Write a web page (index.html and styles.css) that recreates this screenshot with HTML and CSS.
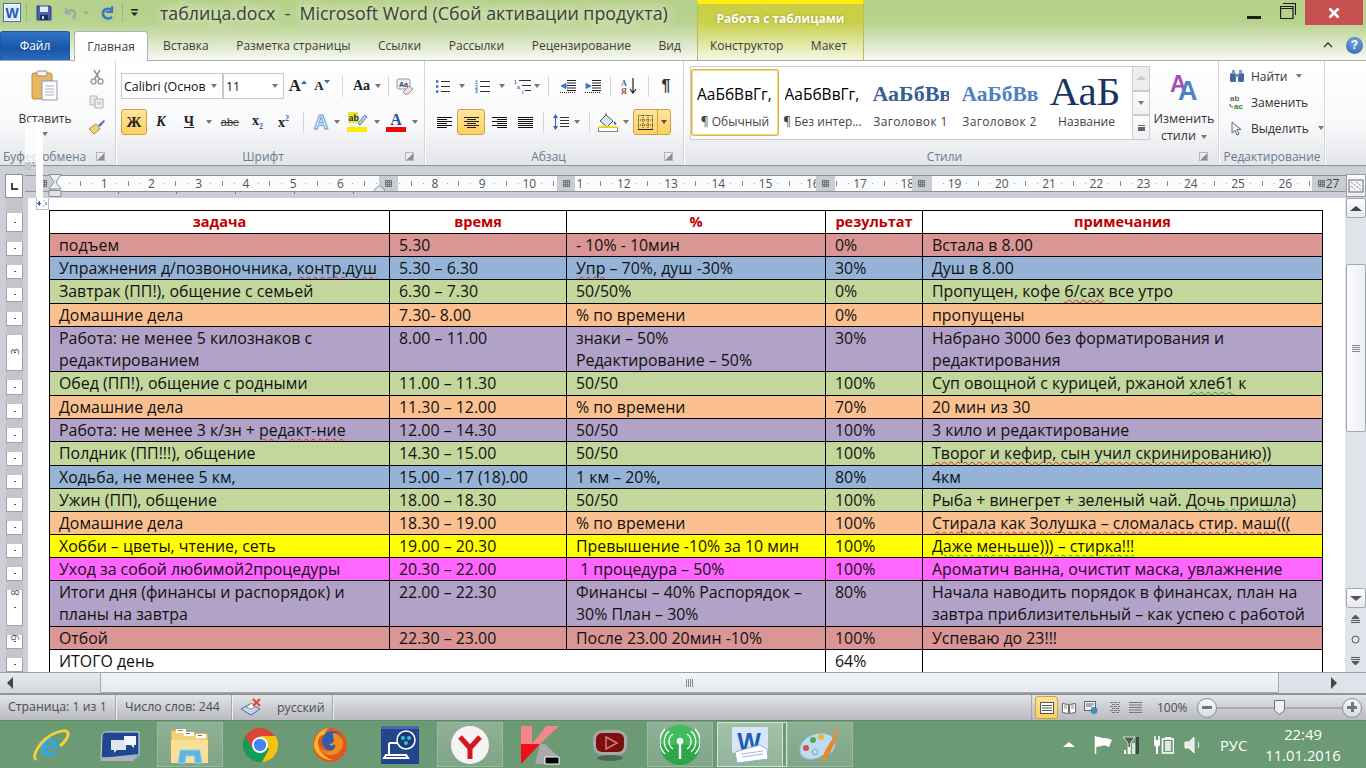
FILE: index.html
```html
<!DOCTYPE html>
<html lang="ru">
<head>
<meta charset="utf-8">
<title>таблица.docx - Microsoft Word</title>
<link rel="stylesheet" href="styles.css">
</head>
<body>
<div class="app">

<header class="top">
  <div class="ctx"><div class="ctxlabel">Работа с таблицами</div></div>
  <div class="titlerow">
    <svg class="wlogo" width="18" height="19" viewBox="0 0 18 19"><rect x=".5" y=".5" width="17" height="18" fill="#fff" stroke="#3f6fb5"/><rect x="2" y="2" width="14" height="15" fill="#dfe9f7"/><text x="9" y="15" text-anchor="middle" class="wlet" fill="#1d5fb4">W</text></svg>
    <span class="qsep"></span>
    <svg class="q1" width="16" height="16" viewBox="0 0 16 16"><path d="M1 1h13l1 1v13H1z" fill="#4a5fae" stroke="#2c3c80"/><rect x="4" y="1.5" width="8" height="5.5" fill="#e9edf6"/><rect x="4" y="10" width="8" height="5" fill="#1f2b66"/><rect x="6" y="11" width="2" height="3" fill="#c6cfe6"/></svg>
    <svg class="q2" width="16" height="16" viewBox="0 0 16 16"><path d="M4 3v5h5M4 8c2-4 9-4 9 1 0 2-1 3-2 5" fill="none" stroke="#9ea8a0" stroke-width="2.4"/></svg>
    <span class="car q3"></span>
    <svg class="q4" width="16" height="16" viewBox="0 0 16 16"><path d="M12 1v6H6" fill="none" stroke="#3b78c2" stroke-width="2.2"/><path d="M12 6C9 2 3 4 3 8.500s5 6.500 9 3.500" fill="none" stroke="#3b78c2" stroke-width="2.600"/></svg>
    <span class="qsep q5"></span>
    <svg class="q6" width="8" height="8" viewBox="0 0 8 8"><rect width="7" height="1.500" fill="#222"/><path d="M0 3.500h7L3.500 7z" fill="#222"/></svg>
    <div class="doctitle">таблица.docx  -  Microsoft Word (Сбой активации продукта)</div>
    <div class="winbtns">
      <span class="wmin"></span>
      <svg class="wmax" width="16" height="16" viewBox="0 0 16 16"><path d="M3 .5h12.500V12M.5 3.500h12.500v12H.5zM.5 5.500H13" fill="none" stroke="#1d1d1d" stroke-width="1.200"/></svg>
      <span class="wclose"><svg width="12" height="12" viewBox="0 0 12 12"><path d="M1.500 1.500l9 9M10.500 1.500l-9 9" stroke="#fff" stroke-width="2.600"/></svg></span>
    </div>
  </div>
  <nav class="tabs">
    <span class="tab-file">Файл</span>
    <span class="tab-home">Главная</span>
    <div class="tablist">
      <span>Вставка</span><span>Разметка страницы</span><span>Ссылки</span><span>Рассылки</span><span>Рецензирование</span><span>Вид</span><span class="tc1">Конструктор</span><span>Макет</span>
    </div>
    <div class="tabright">
      <svg width="10" height="8" viewBox="0 0 10 8"><path d="M1 6l4-4 4 4" fill="none" stroke="#333" stroke-width="1.400"/></svg>
      <span class="help">?</span>
    </div>
  </nav>
</header>

<section class="ribbon">
  <div class="grp g-clip">
    <div class="gbody clip">
      <div class="paste">
        <svg width="28" height="32" viewBox="0 0 28 32"><rect x="1" y="3" width="20" height="26" rx="2" fill="#e8b763" stroke="#b98b3f"/><rect x="6" y="1" width="10" height="5" rx="1" fill="#f6f2e6" stroke="#8a8c8e"/><path d="M11 11h15v19H11z" fill="#fdfdff" stroke="#8b98ad"/><path d="M14 16h9M14 19h9M14 22h9M14 25h9" stroke="#a7b2c3"/></svg>
        <span class="pastelabel">Вставить</span>
        <span class="car"></span>
      </div>
      <div class="clipcol">
        <svg width="14" height="16" viewBox="0 0 14 16"><circle cx="3.500" cy="12.500" r="2.500" fill="none" stroke="#9aa0a8" stroke-width="1.400"/><circle cx="10.500" cy="12.500" r="2.500" fill="none" stroke="#9aa0a8" stroke-width="1.400"/><path d="M4.500 10L10 1M9.500 10L4 1" stroke="#8d9299" stroke-width="1.500"/></svg>
        <svg width="16" height="14" viewBox="0 0 16 14"><path d="M1 1h7v9H1z" fill="#e4e6ea" stroke="#b5b9c0"/><path d="M6 4h8v9H6z" fill="#eef0f3" stroke="#a9aeb6"/><path d="M8 7h4M8 9h4" stroke="#b5b9c0"/></svg>
        <svg width="18" height="16" viewBox="0 0 18 16"><path d="M1 10l7-5 4 5-6 5z" fill="#f0d27a" stroke="#a98a3e"/><path d="M10 6l6-5 1 1-5 6z" fill="#4b6fb3"/></svg>
      </div>
    </div>
    <div class="glabel"><span class="gl-left">Буфер обмена</span><i class="launch"></i></div>
  </div>

  <div class="grp g-font">
    <div class="gbody">
      <div class="row">
        <div class="sel s1"><span>Calibri (Основ</span><span class="car"></span></div>
        <div class="sel s2"><span>11</span><span class="car"></span></div>
        <span class="b w24 sf"><b class="serif big">A</b><svg width="6" height="4" viewBox="0 0 6 4" class="up"><path d="M0 4l3-3.500L6 4z" fill="#3668a8"/></svg></span>
        <span class="b w24 sf"><b class="serif mid">A</b><svg width="6" height="4" viewBox="0 0 6 4" class="up"><path d="M0 0l3 3.500L6 0z" fill="#3668a8"/></svg></span>
        <span class="b w16"><i class="vs"></i></span>
        <span class="b w34"><b class="serif aa">Aa</b><span class="car"></span></span>
        <span class="b w8"><i class="vs"></i></span>
        <span class="b w26"><svg width="18" height="17" viewBox="0 0 18 17"><rect x="1" y="1" width="13" height="10" rx="2" fill="#eef1f6" stroke="#8c9bb1"/><text x="3" y="9" class="tiny" fill="#345">Aa</text><path d="M7 14l6-6 4 3-5 5H9z" fill="#f6d9e2" stroke="#a3899a"/></svg></span>
      </div>
      <div class="row">
        <span class="b w26 on"><b class="serif bold">Ж</b></span>
        <span class="b w28"><b class="serif it">К</b></span>
        <span class="b w28"><b class="serif ul">Ч</b></span>
        <span class="b w12"><span class="car"></span></span>
        <span class="b w30"><span class="abe">abe</span></span>
        <span class="b w25"><b class="serif xx">x<sub>2</sub></b></span>
        <span class="b w27"><b class="serif xx">x<sup>2</sup></b></span>
        <span class="b w13"><i class="vs"></i></span>
        <span class="b w22"><svg width="20" height="20" viewBox="0 0 20 20"><text x="10" y="17" text-anchor="middle" class="glowa" fill="#e8f2fc" stroke="#5b9bd5">A</text></svg></span>
        <span class="b w10"><span class="car"></span></span>
        <span class="b w30"><svg width="22" height="22" viewBox="0 0 22 22"><rect x="2" y="1" width="10" height="11" fill="#e6e640"/><text x="2.500" y="10" class="tiny2" fill="#333">ab</text><path d="M12 12l7-8 2 2-7 8z" fill="#b8c9e2" stroke="#5f7da8"/><rect x="1" y="16" width="20" height="5" fill="#ffeb00"/></svg></span>
        <span class="b w10"><span class="car"></span></span>
        <span class="b w28"><svg width="20" height="22" viewBox="0 0 20 22"><text x="10" y="14" text-anchor="middle" class="colA" fill="#2a4f8c">A</text><rect y="16" width="20" height="5" fill="#f00"/></svg></span>
        <span class="b w10"><span class="car"></span></span>
      </div>
    </div>
    <div class="glabel"><span class="gl">Шрифт</span><i class="launch"></i></div>
  </div>

  <div class="grp g-par">
    <div class="gbody">
      <div class="row">
        <span class="b w20"><svg width="14" height="13" viewBox="0 0 14 13"><path d="M0 1.500h3M0 6.500h3M0 11.500h3" stroke="#3d6cb5" stroke-width="2.400" stroke-dasharray="2.400 1"/><path d="M5 1.500h9M5 6.500h9M5 11.500h9" stroke="#333" stroke-width="1"/></svg></span>
        <span class="b w18"><span class="car"></span></span>
        <span class="b w22"><svg width="15" height="14" viewBox="0 0 15 14"><text x="0" y="5" class="num" fill="#3d6cb5">1</text><text x="0" y="9.500" class="num" fill="#3d6cb5">2</text><text x="0" y="14" class="num" fill="#3d6cb5">3</text><path d="M5 2.500h10M5 7.500h10M5 12.500h10" stroke="#333"/></svg></span>
        <span class="b w18"><span class="car"></span></span>
        <span class="b w22"><svg width="17" height="15" viewBox="0 0 17 15"><text x="0" y="5" class="num" fill="#3d6cb5">1</text><text x="3" y="10" class="num" fill="#3d6cb5">a</text><text x="8" y="15" class="num" fill="#3d6cb5">i</text><path d="M5 1.500h12M8 6.500h9M11 11.500h6" stroke="#333"/></svg></span>
        <span class="b w8"><span class="car"></span></span>
        <span class="b w14"><i class="vs"></i></span>
        <span class="b w25"><svg width="16" height="13" viewBox="0 0 16 13"><path d="M7 .5h9M7 3h9M7 5.500h9M7 8h9M7 10.500h9" stroke="#222"/><path d="M6 3.500L1 6l5 2.500zM4 6h3" fill="#3d78c8" stroke="#3d78c8"/><path d="M0 12.500h16" stroke="#222" stroke-dasharray="1 1"/></svg></span>
        <span class="b w26"><svg width="16" height="13" viewBox="0 0 16 13"><path d="M7 .5h9M7 3h9M7 5.500h9M7 8h9M7 10.500h9" stroke="#222"/><path d="M1 3.500L6 6l-5 2.500z" fill="#3d78c8" stroke="#3d78c8"/><path d="M0 12.500h16" stroke="#222" stroke-dasharray="1 1"/></svg></span>
        <span class="b w8"><i class="vs"></i></span>
        <span class="b w30"><svg width="16" height="16" viewBox="0 0 16 16"><text x="0" y="7.500" class="sa" fill="#2d62a8">А</text><text x="0" y="15.500" class="sa" fill="#a04b38">Я</text><path d="M12 0v14M9 11l3 4 3-4" fill="none" stroke="#222" stroke-width="1.200"/></svg></span>
        <span class="b w8"><i class="vs"></i></span>
        <span class="b w28"><span class="pil">¶</span></span>
      </div>
      <div class="row">
        <span class="b w22"><svg width="15" height="11" viewBox="0 0 15 11"><path d="M0 .5h15M0 2.500h10M0 4.500h15M0 6.500h10M0 8.500h15M0 10.500h10" stroke="#111"/></svg></span>
        <span class="b w28 on ml2"><svg width="15" height="11" viewBox="0 0 15 11"><path d="M0 .5h15M3 2.500h9M0 4.500h15M3 6.500h9M0 8.500h15M3 10.500h9" stroke="#222"/></svg></span>
        <span class="b w28"><svg width="15" height="11" viewBox="0 0 15 11"><path d="M0 .5h15M5 2.500h10M0 4.500h15M5 6.500h10M0 8.500h15M5 10.500h10" stroke="#111"/></svg></span>
        <span class="b w24"><svg width="15" height="11" viewBox="0 0 15 11"><path d="M0 .5h15M0 2.500h15M0 4.500h15M0 6.500h15M0 8.500h15M0 10.500h15" stroke="#111"/></svg></span>
        <span class="b w12"><i class="vs"></i></span>
        <span class="b w23"><svg width="16" height="16" viewBox="0 0 16 16"><path d="M2.500 0L0 4h5zM2.500 16L0 12h5z" fill="#2d62b8"/><path d="M2.500 4v8" stroke="#2d62b8"/><path d="M7 3.500h9M7 6.500h9M7 9.500h9M7 12.500h9" stroke="#333"/></svg></span>
        <span class="b w10"><span class="car"></span></span>
        <span class="b w14"><i class="vs"></i></span>
        <span class="b w24"><svg width="20" height="19" viewBox="0 0 20 19"><path d="M8 2l7 6-6 6-7-6z" fill="#dfe8f4" stroke="#555"/><path d="M8 2V0" stroke="#555"/><path d="M16 8c2 1 3 3 2 4-2 0-3-2-2-4z" fill="#3d78c8"/><rect x=".5" y="14.500" width="19" height="4" fill="#fff" stroke="#888"/><path d="M0 14h20" stroke="#ffe300" stroke-width="1.500"/></svg></span>
        <span class="b w12"><span class="car"></span></span>
        <span class="bsplit">
          <span class="bs1"><svg width="15" height="15" viewBox="0 0 15 15"><path d="M.5.500h14v14H.5zM5 0v15M10 0v15M0 5h15M0 10h15" fill="none" stroke="#333" stroke-dasharray="1 1"/><path d="M0 14.500h15" stroke="#222"/></svg></span>
          <span class="bs2"><span class="car"></span></span>
        </span>
      </div>
    </div>
    <div class="glabel"><span class="gl">Абзац</span><i class="launch"></i></div>
  </div>

  <div class="grp g-sty">
    <div class="gbody styles">
      <div class="gallery">
        <div class="sty st1"><span class="prev p-n">АаБбВвГг,</span><span class="stl">¶ Обычный</span></div>
        <div class="sty st2"><span class="prev p-n">АаБбВвГг,</span><span class="stl">¶ Без интер...</span></div>
        <div class="sty st3"><span class="prev p-h1">АаБбВв</span><span class="stl">Заголовок 1</span></div>
        <div class="sty st4"><span class="prev p-h2">АаБбВв</span><span class="stl">Заголовок 2</span></div>
        <div class="sty st5"><span class="prev p-t">АаБ</span><span class="stl">Название</span></div>
      </div>
      <div class="galscroll">
        <span class="gs dis"><i class="tri-up"></i></span>
        <span class="gs"><span class="car"></span></span>
        <span class="gs"><i class="gmore"></i></span>
      </div>
      <div class="change">
        <svg class="chic" width="32" height="30" viewBox="0 0 32 30"><text x="2" y="21" class="chA1" fill="#a34fb5">A</text><text x="10" y="29" class="chA2" fill="#4f81c9">A</text></svg>
        <span>Изменить</span>
        <span>стили <i class="car"></i></span>
      </div>
    </div>
    <div class="glabel"><span class="gl">Стили</span><i class="launch"></i></div>
  </div>

  <div class="grp g-edit">
    <div class="gbody edit">
      <div class="ed"><svg width="16" height="13" viewBox="0 0 16 13"><rect x="1" y="3" width="6" height="9" rx="1.500" fill="#47689a"/><rect x="9" y="3" width="6" height="9" rx="1.500" fill="#47689a"/><rect x="6" y="4" width="4" height="3" fill="#7a8fb0"/><rect x="3" y="0" width="3" height="4" fill="#7e97bd"/><rect x="10" y="0" width="3" height="4" fill="#7e97bd"/></svg><span>Найти</span><span class="car"></span></div>
      <div class="ed"><svg width="16" height="15" viewBox="0 0 16 15"><text x="1" y="6" class="edt" fill="#666">ab</text><text x="5" y="14" class="edt" fill="#2b8a2b">ac</text><path d="M1 9c0 3 1 3 3 3" fill="none" stroke="#335"/></svg><span>Заменить</span></div>
      <div class="ed"><svg width="16" height="15" viewBox="0 0 16 15"><path d="M3 1v11l3-2.500 2 4.500 2-1-2-4.500h4z" fill="#eef2f8" stroke="#5a6a80"/></svg><span>Выделить</span><span class="car"></span></div>
    </div>
    <div class="glabel"><span class="gl">Редактирование</span></div>
  </div>
</section>

<section class="rulerbar">
  <div class="lbtn"><i class="lmark"></i></div>
  <div class="band">
    <div class="nums"><span>1</span><span>2</span><span>3</span><span>4</span><span>5</span><span>6</span><span></span><span>8</span><span>9</span><span>10</span><span>11</span><span>12</span><span>13</span><span>14</span><span>15</span><span>16</span><span>17</span><span>18</span><span>19</span><span>20</span><span>21</span><span>22</span><span>23</span><span>24</span><span>25</span><span>26</span><span class="n27">27</span></div>
    <i class="mk mk0"></i><i class="mk mk1"></i><i class="mk mk2"></i><i class="mk mk3"></i><i class="mk mk4"></i><i class="mk mk5"></i>
    <svg class="hour" width="16" height="24" viewBox="0 0 16 24"><path d="M2 .5h12L9 8l5 7H2l5-7z" fill="#eceef1" stroke="#8a8f96"/><path d="M2 16.500h12v6H2z" fill="#dfe2e6" stroke="#8a8f96"/></svg>
    <svg class="house" width="11" height="7" viewBox="0 0 11 7"><path d="M.5 6.500v-2l5-4 5 4v2z" fill="#e6e8eb" stroke="#8a8f96"/></svg>
  </div>
  <div class="rulerbtn"><svg width="16" height="16" viewBox="0 0 16 16"><rect x="1" y="2" width="14" height="12" fill="none" stroke="#666"/><path d="M3 4l10 8M8 4l5 4M3 8l4 4" stroke="#666" stroke-dasharray="1 1"/></svg></div>
</section>

<section class="docarea">
  <aside class="vruler">
    <i class="vb vb0"></i><i class="vb vbh d"></i><i class="vb d"></i><i class="vb d"></i><i class="vb vbh d"></i><i class="vb vb37 three"><em>3</em></i><i class="vb vb15 d"></i><i class="vb vb15 d"></i><i class="vb vb15 d"></i><i class="vb d"></i><i class="vb d"></i><i class="vb d"></i><i class="vb d"></i><i class="vb d"></i><i class="vb d"></i><i class="vb vb37 eight"><em>8</em></i><i class="vb d nine"><em>9</em></i><i class="vb d"></i>
  </aside>
  <div class="page">
    <table class="tbl">
      <colgroup><col class="c1"><col class="c2"><col class="c3"><col class="c4"><col class="c5"></colgroup>
      <tr class="h"><th>задача</th><th>время</th><th>%</th><th>результат</th><th>примечания</th></tr>
      <tr class="red"><td>подъем</td><td>5.30</td><td>- 10% - 10мин</td><td>0%</td><td>Встала в 8.00</td></tr>
      <tr class="blue"><td>Упражнения д/позвоночника, <u class="sr">контр.душ</u></td><td>5.30 – 6.30</td><td><u class="sr">Упр</u> – 70%, душ -30%</td><td>30%</td><td>Душ в 8.00</td></tr>
      <tr class="green t"><td>Завтрак (ПП!), общение с семьей</td><td>6.30 – 7.30</td><td>50/50%</td><td>0%</td><td>Пропущен, кофе <u class="sr">б/сах</u> все утро</td></tr>
      <tr class="orange"><td>Домашние дела</td><td>7.30- 8.00</td><td>% по времени</td><td>0%</td><td>пропущены</td></tr>
      <tr class="purple d"><td>Работа: не менее 5 килознаков с редактированием</td><td>8.00 – 11.00</td><td>знаки – 50%<br>Редактирование – 50%</td><td>30%</td><td>Набрано 3000 без форматирования и редактирования</td></tr>
      <tr class="green t"><td>Обед (ПП!), общение с родными</td><td>11.00 – 11.30</td><td>50/50</td><td>100%</td><td>Суп овощной с курицей, ржаной <u class="sg">хлеб1</u> к</td></tr>
      <tr class="orange"><td>Домашние дела</td><td>11.30 – 12.00</td><td>% по времени</td><td>70%</td><td>20 мин из 30</td></tr>
      <tr class="purple"><td>Работа: не менее 3 к/зн + <u class="sr">редакт-ние</u></td><td>12.00 – 14.30</td><td>50/50</td><td>100%</td><td>3 кило и редактирование</td></tr>
      <tr class="green t"><td>Полдник (ПП!!!), общение</td><td>14.30 – 15.00</td><td>50/50</td><td>100%</td><td><u class="sr">Творог и кефир, сын учил скринированию))</u></td></tr>
      <tr class="blue"><td>Ходьба, не менее 5 км,</td><td>15.00 – 17 (18).00</td><td>1 км – 20%,</td><td>80%</td><td>4км</td></tr>
      <tr class="green"><td>Ужин (ПП), общение</td><td>18.00 – 18.30</td><td>50/50</td><td>100%</td><td>Рыба + винегрет + зеленый чай. <u class="sg">Дочь пришла</u>)</td></tr>
      <tr class="orange"><td>Домашние дела</td><td>18.30 – 19.00</td><td>% по времени</td><td>100%</td><td><u class="sr">Стирала как Золушка – сломалась стир. маш(((</u></td></tr>
      <tr class="yellow"><td>Хобби – цветы, чтение, сеть</td><td>19.00 – 20.30</td><td>Превышение -10% за 10 мин</td><td>100%</td><td><u class="sg">Даже меньше))) – стирка!!!</u></td></tr>
      <tr class="pink"><td>Уход за собой любимой2процедуры</td><td>20.30 – 22.00</td><td>&nbsp;1 процедура – 50%</td><td>100%</td><td>Ароматич ванна, очистит маска, увлажнение</td></tr>
      <tr class="purple e"><td>Итоги дня (финансы и распорядок) и планы на завтра</td><td>22.00 – 22.30</td><td>Финансы – 40% Распорядок – 30% План – 30%</td><td>80%</td><td>Начала наводить порядок в финансах, план на завтра приблизительный – как успею с работой</td></tr>
      <tr class="red"><td>Отбой</td><td>22.30 – 23.00</td><td>После 23.00 20мин -10%</td><td>100%</td><td>Успеваю до 23!!!</td></tr>
      <tr class="white"><td colspan="3">ИТОГО день</td><td>64%</td><td></td></tr>
    </table>
  </div>
  <aside class="vscroll">
    <span class="sbtn"><i class="tri-up dark"></i></span>
    <span class="sthumb"><i class="grip"></i></span>
    <span class="sbtn sdown"><i class="tri-dn dark"></i></span>
    <span class="snav"><svg width="9" height="8" viewBox="0 0 9 8"><path d="M4.500 0L1 3.500h7zM0 5.500h9M0 7.500h9" fill="#555" stroke="#555"/></svg></span>
    <span class="snav"><svg width="9" height="9" viewBox="0 0 9 9"><circle cx="4.500" cy="4.500" r="3.500" fill="none" stroke="#555"/></svg></span>
    <span class="snav"><svg width="9" height="8" viewBox="0 0 9 8"><path d="M4.500 8L1 4.500h7zM0 .5h9M0 2.500h9" fill="#555" stroke="#555"/></svg></span>
  </aside>
</section>

<section class="hscroll">
  <span class="hleft"><i class="tri-l"></i></span>
  <span class="hthumb"><i class="hgrip"></i></span>
  <span class="hright"><i class="tri-r"></i></span>
  <span class="hcorner"></span>
</section>

<footer class="status">
  <span class="st st1w">Страница: 1 из 1</span>
  <span class="st st2w">Число слов: 244</span>
  <span class="st stlang">
    <svg width="22" height="20" viewBox="0 0 22 20"><path d="M1 11l9-5 10 5-9 6z" fill="#c6d5ec" stroke="#3f6cb0"/><path d="M6 9l6-4 3 4-4 2z" fill="#fff" stroke="#8a94a6"/><path d="M13 1l7 7M20 1l-7 7" stroke="#e3453a" stroke-width="2"/></svg>
    <span>русский</span>
  </span>
  <div class="stright">
    <span class="vw on"><svg width="14" height="12" viewBox="0 0 14 12"><rect x=".5" y=".5" width="13" height="11" fill="#fff" stroke="#555"/><path d="M2 3.500h10M2 6h10M2 8.500h10" stroke="#555"/></svg></span>
    <span class="vw"><svg width="14" height="12" viewBox="0 0 14 12"><path d="M.5 1.500l6 1v9l-6-1zM13.500 1.500l-6 1v9l6-1z" fill="#fff" stroke="#666"/><path d="M2 4h3M2 6h3M9 4h3M9 6h3" stroke="#888"/></svg></span>
    <span class="vw"><svg width="14" height="13" viewBox="0 0 14 13"><rect x=".5" y=".5" width="11" height="9" fill="#eef" stroke="#666"/><path d="M2 3h8M2 5h6" stroke="#666"/><circle cx="10" cy="9.500" r="3.500" fill="#3f8ac8"/><path d="M8 8l3 2-1 3z" fill="#5aa646"/></svg></span>
    <span class="vw"><svg width="13" height="11" viewBox="0 0 13 11"><path d="M3 .5h10M5 2.500h8M3 4.500h10M5 6.500h8M3 8.500h10M5 10.500h8" stroke="#777" stroke-dasharray="3 1"/></svg></span>
    <span class="vw"><svg width="13" height="11" viewBox="0 0 13 11"><path d="M0 .5h13M0 3h13M0 5.500h13M0 8h13M0 10.500h13" stroke="#777"/></svg></span>
    <span class="zoomv">100%</span>
    <span class="zb"><i class="minus"></i></span>
    <span class="ztrack"><svg class="zthumb" width="11" height="15" viewBox="0 0 11 15"><path d="M.5.500h10v10l-5 4-5-4z" fill="#eef0f3" stroke="#6f7680"/></svg></span>
    <span class="zb zplus"><i class="minus"></i><i class="plusv"></i></span>
  </div>
</footer>

<footer class="taskbar">
  <div class="tk">
    <svg width="40" height="40" viewBox="0 0 40 40"><text x="20" y="31" text-anchor="middle" class="ie" fill="#31a7e7">e</text><path d="M6 35C1 30 12 14 23 9c8-4 14-4 15-1 1 4-4 10-8 13" fill="none" stroke="#f1d23a" stroke-width="3"/></svg>
  </div>
  <div class="tk">
    <svg width="40" height="34" viewBox="0 0 40 34"><path d="M8 4h31v22c0 3-2 4-6 4H1l1-22c0-3 2-4 6-4z" fill="#1f4790" stroke="#d5dce6"/><path d="M1 30l-.5 3H33l6-7" fill="#aab2bd"/><path d="M11 12h15v10H17l-3 3v-3h-3z" fill="#dce4ee"/><path d="M24 8h12v9h-2v3l-3-3h-7z" fill="#f2f5fa"/></svg>
  </div>
  <div class="tk act">
    <svg width="40" height="38" viewBox="0 0 40 38"><path d="M1 4h10l3 3h22c1 0 2 1 2 2v22H1z" fill="#f1d27a" stroke="#c5a04a"/><rect x="6" y="3" width="10" height="4" fill="#fff"/><rect x="14" y="6" width="10" height="4" fill="#fff"/><rect x="26" y="8" width="10" height="4" fill="#fff"/><rect x="8" y="4" width="5" height="1" fill="#5a9f4a"/><rect x="16" y="7" width="4" height="1" fill="#c94a3a"/><rect x="28" y="9" width="4" height="1" fill="#3e82c9"/><path d="M1 14h37v23H1z" fill="#f6e09a"/><path d="M8 37l2-13h20l2 13h-7l-1-7h-8l-1 7z" fill="#5fb4e0" stroke="#9bd5ee"/></svg>
  </div>
  <div class="tk">
    <svg width="36" height="36" viewBox="0 0 36 36"><circle cx="18" cy="18" r="17" fill="#db4437"/><path d="M18 18L3.300 26.500A17 17 0 0 1 3.300 9.500L11 22z" fill="#0f9d58"/><path d="M3.300 26.500A17 17 0 0 0 20 35L27 22 18 18z" fill="#0f9d58"/><path d="M18 9h15.500A17 17 0 0 1 20 35l7-13z" fill="#f4c20d"/><circle cx="18" cy="18" r="8" fill="#fff"/><circle cx="18" cy="18" r="6.200" fill="#4285f4"/></svg>
  </div>
  <div class="tk">
    <svg width="36" height="36" viewBox="0 0 36 36"><circle cx="18" cy="18" r="17" fill="#e2571e"/><circle cx="20" cy="14" r="10" fill="#2f5cab"/><path d="M21 6c5 0 10 5 10 10 0 8-7 13-14 12-5-1-8-4-9-8 2 3 6 5 10 4 4-1 6-4 5-7-2 2-5 2-6 0 3 0 5-2 5-4-1-2-1-5-1-7z" fill="#f28a1e"/><path d="M3 13C5 6 10 2 17 1c-3 2-4 4-4 6-4 1-7 3-7 8 0 8 7 16 15 18-10 1-19-7-19-15 0-2 0-4 1-5z" fill="#f7b32b"/></svg>
  </div>
  <div class="tk">
    <svg width="40" height="40" viewBox="0 0 40 40"><rect x="1" y="1" width="38" height="38" fill="#23458c"/><rect x="1" y="1" width="38" height="3" fill="#4a6bb0"/><circle cx="26" cy="15" r="9" fill="#1c3a7a" stroke="#fff" stroke-width="1.500"/><circle cx="23" cy="13" r="2" fill="#34c2d0"/><circle cx="29" cy="13" r="2" fill="#34c2d0"/><circle cx="26" cy="18" r="2" fill="#34c2d0"/><path d="M9 18v13M9 18h9M9 30H6l-2 3h24l-2-3H9" fill="none" stroke="#fff" stroke-width="2"/></svg>
  </div>
  <div class="tk act">
    <svg width="38" height="38" viewBox="0 0 38 38"><circle cx="19" cy="19" r="19" fill="#f4f4f4"/><path d="M9 11l10 11 10-11" fill="none" stroke="#d6161f" stroke-width="5"/><path d="M19 22v11" stroke="#d6161f" stroke-width="5"/></svg>
  </div>
  <div class="tk">
    <svg width="40" height="40" viewBox="0 0 40 40"><path d="M1 1h11v18L26 1h13L20 19H1z" fill="#f7868a"/><path d="M1 19h19L1 39z" fill="#ee0f18"/><path d="M20 19h5l14 13v7H23l-8 0z" fill="#a9a9a9"/><path d="M25 32h14v7H25z" fill="#000" stroke="#fff"/></svg>
  </div>
  <div class="tk">
    <svg width="36" height="32" viewBox="0 0 36 32"><ellipse cx="18" cy="29" rx="13" ry="3" fill="#3a4a3a" opacity=".6"/><rect x="1" y="1" width="34" height="25" rx="9" fill="#a8a8a8"/><rect x="4" y="4" width="28" height="19" rx="6" fill="#7a0f0f"/><path d="M14 8l11 6-11 6z" fill="none" stroke="#d87a7a" stroke-width="1.500"/></svg>
  </div>
  <div class="tk act">
    <svg width="40" height="40" viewBox="0 0 40 40"><circle cx="20" cy="20" r="20" fill="#2da64a"/><path d="M0 20a20 20 0 0 1 40 0" fill="#43bd5b"/><circle cx="20" cy="16" r="3.200" fill="#fff"/><path d="M20 18v16" stroke="#fff" stroke-width="2.400"/><path d="M13 24a9 9 0 0 1 0-15M27 9a9 9 0 0 1 0 15M9 27a14 14 0 0 1 0-21M31 6a14 14 0 0 1 0 21M5 29a18 18 0 0 1 0-25M35 4a18 18 0 0 1 0 25" fill="none" stroke="#fff" stroke-width="1.300"/></svg>
  </div>
  <div class="tk wd">
    <svg width="38" height="38" viewBox="0 0 38 38"><rect x="1" y="1" width="36" height="26" rx="1" fill="#d9e6f7"/><text x="18" y="25" text-anchor="middle" class="wbig" fill="#1d5fb4">W</text><path d="M4 26l25-7 7 4 1 10-31 4z" fill="#fff" stroke="#8fb0dc"/><path d="M10 28l22-3M11 31l21-3" stroke="#9cb9e0"/></svg>
  </div>
  <div class="tk act">
    <svg width="42" height="36" viewBox="0 0 42 36"><path d="M1 23C1 11 18 3 30 8c9 4 7 15 0 19-3 2-5 0-8 2-6 5-21 5-21-6z" fill="#bcdcf0" stroke="#9cc0da"/><circle cx="7" cy="21" r="3" fill="#d74f3f"/><circle cx="14" cy="13" r="3" fill="#57a84a"/><circle cx="22" cy="10" r="3" fill="#f0b43a"/><circle cx="16" cy="25" r="3" fill="#c2d8e6" stroke="#7ea6c0"/><path d="M22 35c1-6 5-14 12-24l3 2C33 23 29 30 24 35z" fill="#e98a2a"/><path d="M33 12l3-9 5-2-3 12z" fill="#c89a5a"/></svg>
  </div>
  <div class="tray">
    <i class="tri-up white"></i>
    <svg class="tr-flag" width="19" height="18" viewBox="0 0 19 18"><path d="M1.500 0v18" stroke="#fff" stroke-width="1.500"/><path d="M2 1c4-1 6 2 9 1 2 0 5 1 7 2l-3 7c-3-1-4-2-7-1-2 0-4 1-6 1z" fill="#fff"/></svg>
    <svg class="tr-sig" width="18" height="18" viewBox="0 0 18 18"><path d="M1 1h12L8.500 7v11H6V7z" fill="#4e5f50" stroke="#d8dfd8"/><rect x="2" y="14" width="2" height="4" fill="#fff"/><rect x="6" y="11" width="2" height="7" fill="#fff"/><rect x="10" y="7" width="3" height="11" fill="#dfe5df"/><rect x="14" y="1" width="3" height="17" fill="#3e4a3f"/></svg>
    <svg class="tr-pow" width="21" height="18" viewBox="0 0 21 18"><path d="M2 0v4M6 0v4" stroke="#fff" stroke-width="1.500"/><path d="M1 4h6v5l-2 2v7H3v-7L1 9z" fill="#fff"/><rect x="9.500" y="3" width="11" height="14" fill="none" stroke="#fff" stroke-width="1.600"/><rect x="12" y="5" width="6" height="10" fill="#dfe5df"/><rect x="12" y="1" width="6" height="2" fill="#fff"/></svg>
    <svg class="tr-vol" width="18" height="18" viewBox="0 0 18 18"><path d="M1 6h4l5-5v16l-5-5H1z" fill="#e8ece8" stroke="#fff"/><path d="M14 6c1 2 1 4 0 6" fill="none" stroke="#fff"/></svg>
    <span class="lang">РУС</span>
    <div class="clock"><span>22:49</span><span>11.01.2016</span></div>
  </div>
</footer>

<div class="gl-s"></div><div class="gl-w"></div><div class="gl-g"></div>
<div class="movebox"><svg width="11" height="9" viewBox="0 0 11 9"><path d="M1 4.500h3M.5 4.500l2-2v4zM9 3v3M7 1.500v1M7 6.500v1" stroke="#2d62b8"/></svg></div>
</div>
</body>
</html>
```
FILE: styles.css
```css
* { box-sizing: border-box; }
html, body { margin: 0; padding: 0; }
body { width: 1366px; height: 768px; overflow: hidden; font-family: "Open Sans", "Noto Sans", sans-serif; color: #333; }
i, em { font-style: normal; }
svg { display: block; flex: none; }
.app { position: relative; width: 1366px; height: 768px; display: flex; flex-direction: column; overflow: hidden; background: #ccd0d6; }

/* caret */
.car { display: inline-block; width: 0; height: 0; border-left: 3.5px solid transparent; border-right: 3.5px solid transparent; border-top: 4px solid #777; flex: none; }

/* title + tabs */
.top { position: relative; height: 60px; flex: none; background: linear-gradient(#b5d18a 0, #b7d28d 22px, #d5e3bd 40px, #f7f9f2 60px); }
.ctx { position: absolute; left: 697px; top: 0; width: 167px; height: 60px; border-left: 1px solid #bdbd55; border-right: 1px solid #bdbd55; border-top: 4px solid #ffea12; background: linear-gradient(#c9cf42 0, #c9d04a 18px, #dfe59c 38px, #f6f7e6 56px); }
.ctxlabel { text-align: center; font-size: 12px; font-weight: 700; color: #fff; line-height: 30px; text-shadow: 0 0 3px #8f9a30; }
.titlerow { position: relative; height: 31px; display: flex; align-items: center; padding-left: 3px; padding-bottom: 6px; }
.wlet { font: 700 14px "Liberation Sans", sans-serif; }
.qsep { width: 1px; height: 19px; background: #9fb487; margin-left: 5px; }
.q1 { margin-left: 9px; }
.q2 { margin-left: 10px; }
.q3 { margin-left: 5px; border-top-color: #9fb08f; }
.q4 { margin-left: 11px; }
.q5 { margin-left: 6px; }
.q6 { margin-left: 8px; }
.doctitle { margin-left: 21px; font-size: 17.800px; color: #3c403a; white-space: pre; text-shadow: 0 0 12px #edf3e2, 0 0 12px #edf3e2; }
.winbtns { margin-left: auto; display: flex; align-items: center; height: 25px; align-self: flex-start; }
.wmin { width: 14px; height: 3px; background: #1d1d1d; margin-right: 19px; margin-top: 9px; }
.wmax { margin-right: 9px; margin-top: -4px; }
.wclose { width: 58px; height: 25px; background: #c75050; display: flex; align-items: center; justify-content: center; margin-right: 3px; }

.tabs { position: relative; height: 29px; display: flex; font-size: 12px; }
.tab-file { width: 70px; height: 29px; background: linear-gradient(#2f74c8, #1a55a4 60%, #2a6cc0); border: 1px solid #1e58a5; border-bottom: 0; border-radius: 3px 3px 0 0; color: #fff; text-align: center; line-height: 28px; }
.tab-home { margin-left: 4px; width: 74px; height: 30px; background: linear-gradient(#fff, #fdfdfe); border: 1px solid #b0b3b8; border-bottom: 0; border-radius: 3px 3px 0 0; text-align: center; line-height: 29px; color: #3d3d3d; z-index: 2; }
.tablist { display: flex; gap: 27.600px; margin-left: 15px; line-height: 30px; color: #3d3d3d; white-space: nowrap; }
.tablist .tc1 { margin-left: 1.500px; }
.tabright { margin-left: auto; display: flex; align-items: center; gap: 13px; margin-right: 3px; margin-top: -1px; }
.help { width: 17px; height: 17px; border-radius: 50%; background: radial-gradient(circle at 50% 30%, #7aa5e0, #2d5fb0); color: #fff; font: 700 12px/17px "Liberation Sans", sans-serif; text-align: center; }

/* ribbon */
.ribbon { height: 106px; flex: none; display: flex; background: linear-gradient(#fff 0, #f9f9fb 60%, #e3e5e9 100%); border-top: 1px solid #a9adb3; border-bottom: 1px solid #8f9399; }
.grp { height: 104px; display: flex; flex-direction: column; border-right: 1px solid #d5d7db; box-shadow: 1px 0 0 #fff; flex: none; }
.gbody { flex: 1; }
.glabel { height: 17px; flex: none; display: flex; align-items: center; font-size: 12px; color: #6c7a90; white-space: nowrap; }
.gl { flex: 1; text-align: center; }
.gl-left { flex: 1; padding-left: 3px; }
.launch { width: 9px; height: 9px; border: 1px solid #b3b6bb; margin-right: 10px; background: linear-gradient(135deg, transparent 55%, #8a8d93 55%); flex: none; }
.g-clip { width: 116px; }
.g-font { width: 309px; padding-left: 5px; }
.g-par { width: 259px; padding-left: 8px; }
.g-sty { width: 535px; padding-left: 6px; }
.g-edit { width: 106px; }

.clip { display: flex; }
.paste { width: 85px; display: flex; flex-direction: column; align-items: center; padding-top: 9px; padding-left: 5px; font-size: 12px; }
.pastelabel { margin-top: 9px; line-height: 16px; }
.paste .car { margin-top: 5px; }
.clipcol { width: 24px; display: flex; flex-direction: column; align-items: center; gap: 10px; padding-top: 8px; }

.row { display: flex; height: 36px; align-items: center; }
.g-font .row:first-child, .g-par .row:first-child { margin-top: 7px; }
.b { display: flex; align-items: center; justify-content: center; height: 26px; flex: none; position: relative; gap: 5px; }
.w8 { width: 8px; } .w10 { width: 10px; } .w12 { width: 12px; } .w13 { width: 13px; } .w14 { width: 14px; } .w16 { width: 16px; } .w18 { width: 18px; } .w20 { width: 20px; } .w22 { width: 22px; } .w23 { width: 23px; } .w24 { width: 24px; } .w25 { width: 25px; } .w26 { width: 26px; } .w27 { width: 27px; } .w28 { width: 28px; } .w30 { width: 30px; } .w34 { width: 34px; }
.ml2 { margin-left: 2px; }
.on { background: linear-gradient(#ffe69a, #ffcf5f); border: 1px solid #c9a24a; border-radius: 3px; }
.vs { width: 1px; height: 21px; background: #d3d5d9; }
.sel { height: 26px; background: #fff; border: 1px solid #c4c8cd; display: flex; align-items: center; justify-content: space-between; padding: 0 5px 0 2px; font-size: 12.400px; color: #111; white-space: nowrap; flex: none; }
.s1 { width: 102px; }
.s2 { width: 61px; margin-right: 2px; }
.serif { font-family: "Liberation Serif", serif; color: #222; }
.big { font-size: 17px; }
.mid { font-size: 13px; }
.sf { gap: 0; align-items: center; }
.up { margin-top: -9px; }
.aa { font-size: 14px; }
.bold { font-size: 15px; font-weight: 700; }
.it { font-size: 14px; font-style: italic; }
.ul { font-size: 14px; text-decoration: underline; }
.abe { font: 400 11px "Liberation Sans", sans-serif; text-decoration: line-through; color: #333; }
.xx { font-size: 14px; }
.xx sub, .xx sup { font-size: 8px; color: #3668a8; }
.tiny { font: 700 7px "Liberation Sans", sans-serif; }
.tiny2 { font: 700 9px "Liberation Sans", sans-serif; }
.glowa { font: 700 20px "Liberation Sans", sans-serif; }
.colA { font: 700 16px "Liberation Serif", serif; }
.num { font: 700 5px "Liberation Sans", sans-serif; }
.sa { font: 700 8px "Liberation Serif", serif; }
.pil { font: 700 16px "Liberation Sans", sans-serif; color: #333; }
.bsplit { margin-left: 1px; width: 38px; height: 26px; display: flex; background: linear-gradient(#ffe69a, #ffcf5f); border: 1px solid #c9a24a; border-radius: 3px; flex: none; }
.bs1 { width: 24px; display: flex; align-items: center; justify-content: center; border-right: 1px solid #c9a24a; }
.bs2 { flex: 1; display: flex; align-items: center; justify-content: center; }
.bs2 .car { border-top-color: #555; }

.styles { display: flex; padding-top: 5px; }
.gallery { width: 443px; height: 74px; background: #fff; border: 1px solid #c9ccd1; display: flex; padding: 2px 0 0 0; flex: none; }
.sty { height: 67px; display: flex; flex-direction: column; align-items: center; overflow: hidden; flex: none; }
.st1 { width: 88px; border: 2px solid #f9d670; border-radius: 3px; outline: 1px solid #d9b65c; outline-offset: -1px; }
.st2 { width: 83px; margin-left: 2px; }
.st3 { width: 87px; margin-left: 3px; }
.st4 { width: 91px; }
.st5 { width: 83px; }
.prev { display: block; flex: none; height: 45px; line-height: 50px; white-space: nowrap; overflow: hidden; color: #000; }
.p-n { width: 76px; font-size: 15.500px; }
.st1 .prev { line-height: 46px; height: 43px; }
.p-h1 { width: 76px; font: 700 22px/50px "Liberation Serif", serif; color: #366092; }
.p-h2 { width: 76px; font: 700 21.500px/50px "Liberation Serif", serif; color: #4f81bd; }
.p-t { width: 74px; font: 400 41px/44px "Liberation Serif", serif; color: #17365d; }
.stl { font-size: 12px; line-height: 16px; color: #444; white-space: nowrap; }
.st3 .stl, .st4 .stl { letter-spacing: .35px; }
.galscroll { width: 17px; height: 74px; display: flex; flex-direction: column; flex: none; }
.gs { height: 25px; border: 1px solid #c9ccd1; border-left: 0; border-top-width: 1px; background: linear-gradient(#fdfdfe, #eef0f3); display: flex; align-items: center; justify-content: center; }
.gs.dis { background: #ecedef; }
.tri-up { display: block; width: 0; height: 0; border-left: 5px solid transparent; border-right: 5px solid transparent; border-bottom: 4px solid #c5c8cc; }
.gmore { display: block; width: 7px; height: 6px; border-top: 1px solid #666; border-bottom: 4px solid #666; border-left: 0; }
.change { flex: 1; display: flex; flex-direction: column; align-items: center; font-size: 12.500px; line-height: 17px; color: #333; padding-top: 5px; }
.chic { margin-bottom: 9px; overflow: visible; }
.change .car { vertical-align: middle; margin-left: 2px; }
.chA1 { font: 700 23px "Liberation Sans", sans-serif; }
.chA2 { font: 700 27px "Liberation Sans", sans-serif; }
.edit { display: flex; flex-direction: column; padding: 2px 0 0 10px; }
.ed { height: 26px; display: flex; align-items: center; gap: 6px; font-size: 12px; color: #333; white-space: nowrap; }
.ed .car { margin-left: 3px; }
.edt { font: 700 8px "Liberation Sans", sans-serif; }
.g-edit .gl { padding-left: 1px; }

/* ruler */
.rulerbar { height: 32px; flex: none; display: flex; padding: 8px 0 0 5px; background: linear-gradient(#777, #777) 118px 26px / 1px 2px no-repeat, linear-gradient(#777, #777) 176px 26px / 1px 2px no-repeat, linear-gradient(#777, #777) 235px 26px / 1px 2px no-repeat, linear-gradient(#777, #777) 294px 26px / 1px 2px no-repeat, linear-gradient(#777, #777) 353px 26px / 1px 2px no-repeat, #ccd0d6; }
.lbtn { width: 19px; height: 24px; background: #fff; border: 1px solid #8e9297; display: flex; align-items: center; justify-content: center; }
.lmark { width: 7px; height: 7px; border-left: 2px solid #444; border-bottom: 2px solid #444; }
.band { position: relative; width: 1321px; height: 17px; margin: 1px 0 0 2px; background:
  repeating-linear-gradient(90deg, transparent 0 20px, #aaa 20px 21px, transparent 21px 23.625px) 0 7px / 100% 1px no-repeat,
  repeating-linear-gradient(90deg, transparent 0 8px, #888 8px 9px, transparent 9px 47.250px) 0 5px / 100% 5px no-repeat,
  #fafbfc; border-top: 1px solid #8e9297; border-bottom: 1px solid #8e9297; }
.nums { display: flex; padding-left: 55.400px; font-size: 12px; line-height: 15px; color: #555; position: relative; }
.nums span { width: 47.250px; flex: none; text-align: center; }
.n27 { position: relative; z-index: 2; color: #444; }
.mk { position: absolute; top: -1px; height: 17px; background: #c9cdd3; border-top: 1px solid #8e9297; border-bottom: 1px solid #8e9297; }
.mk0 { left: 0; width: 32px; }
.mk1 { left: 354px; width: 19px; }
.mk2 { left: 532px; width: 18px; }
.mk3 { left: 791px; width: 19px; }
.mk4 { left: 887px; width: 20px; }
.mk5 { left: 1287px; width: 34px; }
.mk1::after, .mk2::after, .mk3::after, .mk4::after, .mk5::after, .mk0::after { content: ""; position: absolute; top: 4px; left: 6px; width: 7px; height: 7px; background: repeating-linear-gradient(#555 0 1px, transparent 1px 2px), repeating-linear-gradient(90deg, #555 0 1px, transparent 1px 2px); opacity: .75; }
.mk0::after { left: 15px; }
.hour { position: absolute; left: 22px; top: -2px; }
.house { position: absolute; left: 349px; top: 9px; }
.rulerbtn { width: 21px; height: 23px; background: linear-gradient(#fdfdfe, #eceef1); border: 1px solid #9a9ea4; display: flex; align-items: center; justify-content: center; }

/* document */
.docarea { height: 474px; flex: none; display: flex; overflow: hidden; }
.vruler { width: 28px; flex: none; background: linear-gradient(#c3c5c9, #c3c5c9) 6px 0 / 17px 100% no-repeat, #ccd0d6; padding: 14px 5px 0 6px; display: flex; flex-direction: column; }
.vb { display: block; flex: none; position: relative; background: #fff; border: 1px solid #9ea2a8; border-top: 1px solid #c0c3c8; height: 15px; margin-top: 8px; background-image: linear-gradient(#555, #555); background-repeat: no-repeat; background-size: 2px 1px; background-position: 50% 50%; }
.vb0 { height: 20px; margin-top: 0; }
.vb37 { height: 37px; }
.vb15 { height: 16px; }
.vbh { margin-top: 9px; }
.vb em { position: absolute; left: 4px; font-size: 11px; color: #555; transform: rotate(-90deg); line-height: 11px; }
.three em { top: 11px; }
.eight em { top: -3px; }
.nine { overflow: hidden; }
.nine em { top: -3px; }
.page { flex: 1; background: #fff; padding: 12px 0 0 21px; overflow: hidden; }
.tbl { border-collapse: collapse; table-layout: fixed; width: 1273px; font-size: 15.900px; color: #111; }
.c1 { width: 340px; } .c2 { width: 177px; } .c3 { width: 259px; } .c4 { width: 97px; } .c5 { width: 400px; }
.tbl th, .tbl td { border: 1px solid #000; padding: 0 0 0 9px; vertical-align: top; text-align: left; line-height: 22px; font-weight: 400; white-space: normal; overflow: hidden; }
.tbl th { text-align: center; padding: 0; color: #c00000; font-weight: 700; font-size: 14.500px; }
.tbl tr { height: 23px; }
.tbl tr.t { height: 24px; }
.tbl tr.d { height: 45px; }
.tbl tr.e { height: 46px; }
.red td { background: #d99694; }
.blue td { background: #95b3d7; }
.green td { background: #c3d69b; }
.orange td { background: #fac090; }
.purple td { background: #b2a2c7; }
.yellow td { background: #ffff00; }
.pink td { background: #ff66ff; }
.white td { background: #fff; }
.sr { text-decoration: underline wavy #e02020 1px; text-underline-offset: 2px; }
.sg { text-decoration: underline wavy #22a030 1px; text-underline-offset: 2px; }

.vscroll { width: 21px; flex: none; background: #dfe3ea; display: flex; flex-direction: column; align-items: center; }
.sbtn { width: 20px; height: 20px; background: linear-gradient(#fdfdfe, #e6e8ec); border: 1px solid #a5a9af; border-radius: 2px; display: flex; align-items: center; justify-content: center; flex: none; }
.dark { border-bottom-color: #444; }
.sthumb { width: 20px; height: 168px; margin-top: 46px; background: linear-gradient(90deg, #fafbfc, #eef0f4); border: 1px solid #a5a9af; border-radius: 2px; display: flex; align-items: center; justify-content: center; flex: none; }
.grip { width: 8px; height: 7px; background: repeating-linear-gradient(#888 0 1px, transparent 1px 2px); }
.sdown { margin-top: 156px; }
.snav { height: 21px; display: flex; align-items: center; justify-content: center; flex: none; }
.tri-dn { display: block; width: 0; height: 0; border-left: 6px solid transparent; border-right: 6px solid transparent; border-top: 5px solid #555; }
.sbtn .tri-up { border-left-width: 6px; border-right-width: 6px; border-bottom-width: 5px; }

/* horizontal scroll */
.hscroll { height: 21px; flex: none; display: flex; background: #d7dbe2; border-top: 1px solid #9da1a8; }
.hleft { width: 100px; display: flex; align-items: center; padding-left: 7px; background: linear-gradient(#e7e9ee, #d2d6dd); }
.hthumb { width: 1179px; background: linear-gradient(#f2f4f7, #e5e8ee); border: 1px solid #a5a9af; border-top: 0; border-radius: 0 0 2px 2px; display: flex; align-items: center; justify-content: center; }
.hgrip { width: 7px; height: 8px; background: repeating-linear-gradient(90deg, #888 0 1px, transparent 1px 2px); margin-right: 1px; }
.hright { width: 66px; display: flex; align-items: center; justify-content: flex-end; padding-right: 8px; background: #dfe2e8; }
.hcorner { flex: 1; background: #dfe3ea; }
.tri-l { display: block; width: 0; height: 0; border-top: 6px solid transparent; border-bottom: 6px solid transparent; border-right: 6px solid #444; }
.tri-r { display: block; width: 0; height: 0; border-top: 6px solid transparent; border-bottom: 6px solid transparent; border-left: 6px solid #444; }

/* status bar */
.status { height: 27px; flex: none; display: flex; align-items: center; background: linear-gradient(#e2e4e8, #c8cace 60%, #b9bbc0); border-top: 2px solid #909499; font-size: 12.300px; color: #4a4f57; white-space: nowrap; }
.st { height: 25px; line-height: 24px; padding: 0 0 0 8px; border-right: 1px solid #a3a6ab; box-shadow: 1px 0 0 #eceef0; flex: none; }
.st1w { width: 116px; }
.st2w { width: 116px; padding-left: 9px; }
.stlang { width: 101px; display: flex; align-items: center; gap: 15px; }
.stright { margin-left: auto; display: flex; align-items: center; height: 25px; border-left: 1px solid #a3a6ab; padding-left: 3px; }
.vw { width: 22px; height: 23px; display: flex; align-items: center; justify-content: center; flex: none; }
.vw.on { width: 23px; }
.zoomv { margin-left: 11px; width: 32px; flex: none; font-size: 12px; color: #4a4f57; }
.zb { width: 20px; height: 20px; border-radius: 50%; border: 1px solid #8a8e95; background: linear-gradient(#f8f9fa, #d8dade); position: relative; flex: none; margin-left: 8px; }
.zplus { margin-left: 0; margin-right: 4px; }
.minus { position: absolute; left: 4px; top: 7px; width: 10px; height: 3px; background: #6f737a; }
.plusv { position: absolute; left: 7.500px; top: 3.500px; width: 3px; height: 10px; background: #6f737a; }
.ztrack { width: 125px; height: 2px; background: #a9adb3; position: relative; flex: none; }
.zthumb { position: absolute; left: 57px; top: -7px; }

/* taskbar */
.taskbar { height: 48px; flex: none; background: #6b9a74; display: flex; gap: 4px; padding: 1px 0 1px 17px; border-top: 1px solid #5d8a66; }
.tk { width: 66px; display: flex; align-items: center; justify-content: center; flex: none; position: relative; }
.tk.act { border: 1px solid #9abba0; background: linear-gradient(#8fb096, #80a589); }
.tk.wd { border: 1px solid #d5e4d8; background: linear-gradient(#a4c2aa, #92b49a); }
.tk.wd::after { content: ""; position: absolute; right: -5px; top: -1px; bottom: -1px; width: 4px; border: 1px solid #d5e4d8; border-left: 0; }
.ie { font: 700 34px "Liberation Sans", sans-serif; }
.wbig { font: 700 25px "Liberation Sans", sans-serif; }
.tray { margin-left: auto; display: flex; align-items: center; color: #fff; }
.tri-up.white { border-bottom-color: #fff; margin-right: 19px; border-left-width: 6px; border-right-width: 6px; border-bottom-width: 5px; }
.tr-flag { margin-right: 9px; }
.tr-sig { margin-right: 13px; }
.tr-pow { margin-right: 10px; }
.tr-vol { margin-right: 18px; }
.lang { font-size: 14.700px; width: 33px; }
.clock { width: 100px; display: flex; flex-direction: column; align-items: center; font-size: 14.800px; line-height: 21px; margin-right: 13px; }

/* screen glitch at the table move handle */
.gl-s { position: absolute; left: 25px; top: 122px; width: 11px; height: 40px; background: rgba(255, 255, 255, .78); }
.gl-w { position: absolute; left: 36px; top: 122px; width: 7px; height: 78px; background: #fff; }
.gl-g { position: absolute; left: 25px; top: 162px; width: 6px; height: 8px; background: #c4c7cc; }
.movebox { position: absolute; left: 36px; top: 198px; width: 13px; height: 12px; background: #fff; border: 1px solid #b9bcc1; border-top: 0; display: flex; align-items: center; justify-content: center; }
```
